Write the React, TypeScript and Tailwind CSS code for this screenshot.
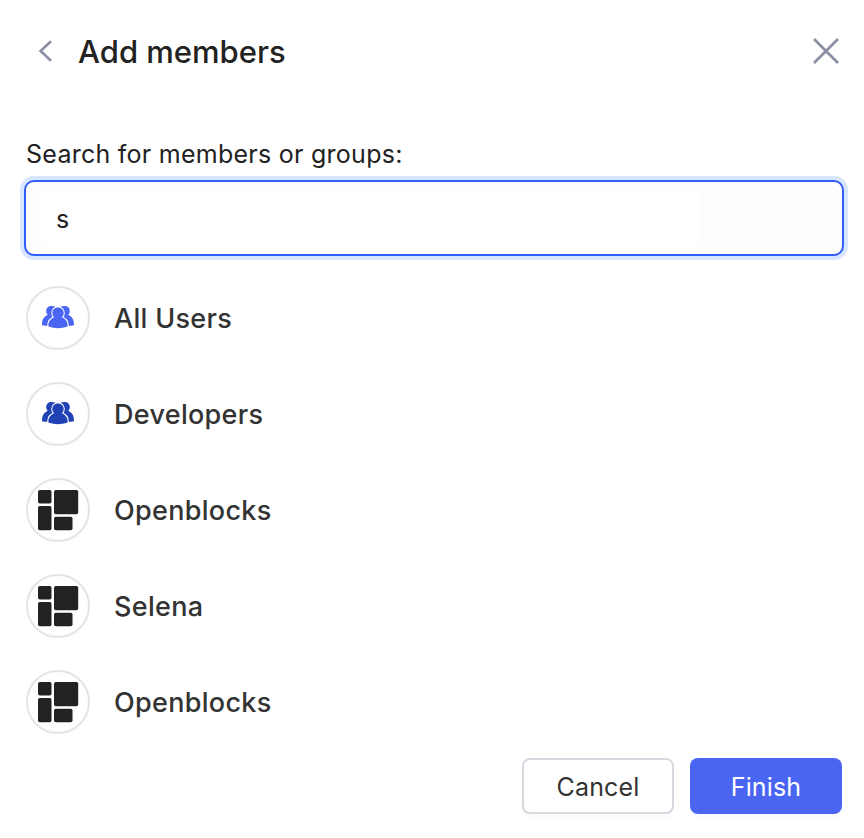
type Kind = "group" | "blocks";

const members: { name: string; kind: Kind; color: string }[] = [
  { name: "All Users", kind: "group", color: "#4965f2" },
  { name: "Developers", kind: "group", color: "#2142b4" },
  { name: "Openblocks", kind: "blocks", color: "#222222" },
  { name: "Selena", kind: "blocks", color: "#222222" },
  { name: "Openblocks", kind: "blocks", color: "#222222" },
];

function GroupIcon({ color }: { color: string }) {
  return (
    <svg width="32" height="24" viewBox="0 0 32 24" fill={color}>
      <path d="M9.500 0C6.400 0 4.200 2 4.200 5c0 1.700.6 3 1.600 4C2.300 10.300 0 13.500 0 18.300c0 .7.300 1 .9 1.100 1.700.3 3.600.5 5.600.4H16V2.500C14.500.8 12 0 9.500 0Z" />
      <path d="M22.500 0c3.100 0 5.300 2 5.300 5 0 1.700-.6 3-1.600 4 3.500 1.300 5.800 4.500 5.800 9.300 0 .7-.3 1-.9 1.100-1.700.3-3.600.5-5.600.4H16V2.500C17.500.8 20 0 22.500 0Z" />
      <path d="M13.200 0h5.600L16 2.500Z" fill="white" />
      <path
        d="M16 1.400c-3.400 0-5.700 2.300-5.700 5.500 0 1.800.8 3.400 2.100 4.400-3.700 1.200-6.100 4.500-6.100 8.300 0 .6.200 1 .8 1.200 5.400 1.800 12.400 1.800 17.800 0 .6-.2.8-.6.8-1.200 0-3.800-2.400-7.100-6.100-8.300 1.300-1 2.100-2.600 2.100-4.400 0-3.200-2.300-5.500-5.700-5.500Z"
        stroke="white"
        strokeWidth="2.200"
        paintOrder="stroke"
      />
    </svg>
  );
}

function BlocksIcon({ color }: { color: string }) {
  return (
    <svg width="42" height="42" viewBox="0 0 42 42" fill={color}>
      <rect x="1" y="1" width="13.500" height="13.500" rx="1.800" />
      <rect x="17" y="1" width="24.200" height="24.200" rx="1.800" />
      <rect x="1" y="17" width="13.500" height="24.200" rx="1.800" />
      <rect x="17" y="27.700" width="18.500" height="13.500" rx="1.800" />
    </svg>
  );
}

export default function App() {
  return (
    <div className="flex h-[838px] w-[864px] flex-col overflow-hidden bg-white font-['Inter','Liberation_Sans',sans-serif] text-[#222222]">
      <header className="flex h-[102px] shrink-0 items-center pl-[37px] pr-[24px]">
        <button className="flex" aria-label="Back">
          <svg width="16" height="24" viewBox="0 0 16 24" fill="none" stroke="#8b8fa3" strokeWidth="2.600">
            <path d="M14 2.200 3.600 12 14 21.800" />
          </svg>
        </button>
        <h1 className="ml-[25px] flex-1 whitespace-nowrap pt-[2px] text-[31px] font-medium leading-[40px]">
          Add members
        </h1>
        <button className="flex" aria-label="Close">
          <svg width="28" height="28" viewBox="0 0 28 28" fill="none" stroke="#8b8fa3" strokeWidth="2.800">
            <path d="M2 2 26 26M26 2 2 26" />
          </svg>
        </button>
      </header>
      <label className="mt-[34px] h-[36px] shrink-0 whitespace-nowrap pl-[26px] text-[25px] leading-[36px] tracking-[0.260px]">
        Search for members or groups:
      </label>
      <div className="ml-[24px] mt-[8px] flex h-[76px] w-[820px] shrink-0 rounded-[10px] border-2 border-[#315efb] bg-[#fdfdfd] py-[8px] pl-[16px] shadow-[0_0_0_4px_#d6e7ff]">
        <div className="flex w-[657px] items-center rounded-[4px] bg-white pl-[14px] text-[25px] leading-[36px]">
          <span className="pt-[2px]">s</span>
        </div>
      </div>
      <ul className="mt-[30px] flex shrink-0 flex-col gap-8 pl-[26px]">
        {members.map((m, i) => (
          <li key={i} className="flex h-16 items-center">
            <div className="flex size-16 items-center justify-center rounded-full border-2 border-[#e4e4e4]">
              {m.kind === "group" ? <GroupIcon color={m.color} /> : <BlocksIcon color={m.color} />}
            </div>
            <span className="ml-6 whitespace-nowrap pt-[2px] text-[27px] font-medium leading-[36px] tracking-[0.300px] text-[#333333]">
              {m.name}
            </span>
          </li>
        ))}
      </ul>
      <footer className="mt-6 flex shrink-0 justify-end gap-4 pr-[22px] text-[25px] tracking-[0.150px]">
        <button className="flex h-14 w-[152px] items-center justify-center rounded-lg border-2 border-[#d7d9e0] bg-white pt-[4px] text-[#333333] shadow-[0_4px_0_#fbfbfb]">
          Cancel
        </button>
        <button className="flex h-14 w-[152px] items-center justify-center rounded-lg bg-[#4965f2] pt-[4px] text-white shadow-[0_4px_0_#fbfbfb]">
          Finish
        </button>
      </footer>
    </div>
  );
}
